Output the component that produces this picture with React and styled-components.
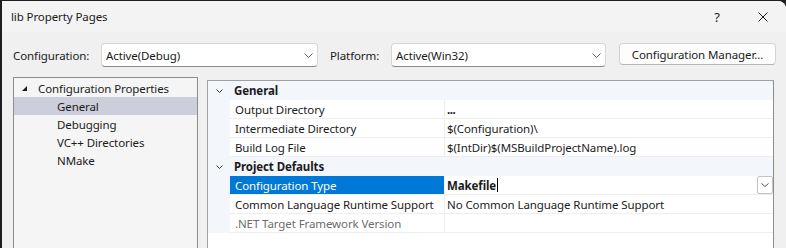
import React from 'react';
import styled, { createGlobalStyle } from 'styled-components';

const Global = createGlobalStyle`
  html, body { margin: 0; padding: 0; background: #1e1e1e; }
  body {
    font-family: "Noto Sans", "Open Sans", sans-serif;
    font-size: 11.5px;
    letter-spacing: -0.1px;
    color: #1b1b1b;
  }
  #root { width: 786px; height: 248px; overflow: hidden; }
`;

const Win = styled.div`
  margin: 1px 0 0 2px;
  width: 784px;
  height: 247px;
  background: #f0f0f0;
  border-top-right-radius: 8px;
  overflow: hidden;
  display: flex;
  flex-direction: column;
`;

const TitleBar = styled.div`
  height: 31px;
  flex-shrink: 0;
  background: #f3f3f3;
  display: flex;
  align-items: center;
  padding-left: 9px;
`;

const Title = styled.div`
  flex: 1;
  color: #1a1a1a;
`;

const CaptionBtn = styled.div`
  width: 46px;
  height: 31px;
  display: flex;
  align-items: center;
  justify-content: center;
  font-size: 13px;
  color: #1a1a1a;
`;

const Toolbar = styled.div`
  margin-top: 11px;
  padding-left: 11px;
  height: 24px;
  display: flex;
  align-items: center;
  flex-shrink: 0;
`;

const Label = styled.div`
  width: ${(p) => p.$w}px;
  flex-shrink: 0;
  color: #1a1a1a;
`;

const Combo = styled.div`
  width: ${(p) => p.$w}px;
  height: 24px;
  box-sizing: border-box;
  background: #ffffff;
  border: 1px solid #d6d6d6;
  border-bottom-color: #8a8a8a;
  border-radius: 4px;
  display: flex;
  align-items: center;
  padding: 0 0 0 4px;
  margin-right: ${(p) => p.$mr}px;
  flex-shrink: 0;
`;

const ComboText = styled.div`
  flex: 1;
`;

const Chevron = styled.svg`
  flex-shrink: 0;
`;

const Button = styled.div`
  width: 157px;
  height: 22px;
  box-sizing: border-box;
  align-self: flex-start;
  background: #fdfdfd;
  border: 1px solid #d3d3d3;
  border-bottom-color: #b5b5b5;
  border-radius: 4px;
  display: flex;
  align-items: center;
  justify-content: center;
  flex-shrink: 0;
`;

const Body = styled.div`
  flex: 1;
  display: flex;
  align-items: flex-start;
  gap: 9px;
  margin-top: 10px;
  padding-left: 11px;
`;

const Tree = styled.div`
  width: 185px;
  height: 200px;
  box-sizing: border-box;
  border: 1px solid #8d8d8d;
  background: #f5f5f5;
  padding-top: 1px;
  flex-shrink: 0;
`;

const TreeRow = styled.div`
  height: 18px;
  display: flex;
  align-items: center;
  padding-left: ${(p) => p.$indent}px;
  background: ${(p) => (p.$selected ? '#cccedb' : 'transparent')};
  white-space: nowrap;
`;

const Expander = styled.svg`
  margin-left: -16px;
  margin-right: 11px;
  flex-shrink: 0;
`;

const Grid = styled.div`
  width: 567px;
  height: 200px;
  box-sizing: border-box;
  margin-top: 3px;
  border: 1px solid #a0a0a0;
  border-right-color: #8d8d8d;
  background: #ffffff;
  flex-shrink: 0;
`;

const CatRow = styled.div`
  height: 19px;
  display: flex;
  align-items: center;
  background: #f3f6fb;
  font-weight: 700;
`;

const CatChevron = styled.div`
  width: 22px;
  height: 19px;
  display: flex;
  align-items: center;
  justify-content: center;
  flex-shrink: 0;
`;

const CatTitle = styled.div`
  padding-left: 4px;
`;

const PropRow = styled.div`
  height: 19px;
  display: flex;
`;

const Gutter = styled.div`
  width: 22px;
  flex-shrink: 0;
  background: #f3f6fb;
`;

const NameCell = styled.div`
  width: 215px;
  flex-shrink: 0;
  box-sizing: border-box;
  height: 19px;
  padding-left: 5px;
  display: flex;
  align-items: center;
  overflow: hidden;
  border-bottom: 1px solid #eeeeee;
  border-right: 1px solid #eeeeee;
  background: ${(p) => (p.$selected ? '#0078d7' : '#ffffff')};
  color: ${(p) => (p.$selected ? '#ffffff' : p.$disabled ? '#6d6d6d' : '#1b1b1b')};
  white-space: nowrap;
`;

const ValueCell = styled.div`
  flex: 1;
  height: 19px;
  box-sizing: border-box;
  padding-left: 2px;
  display: flex;
  align-items: center;
  border-bottom: 1px solid #eeeeee;
  font-weight: ${(p) => (p.$bold ? 700 : 400)};
  white-space: nowrap;
`;

const Caret = styled.span`
  display: inline-block;
  width: 1px;
  height: 14px;
  background: #000;
  margin-left: 1px;
`;

const ValueText = styled.div`
  flex: 1;
  display: flex;
  align-items: center;
`;

const Ellipsis = styled.span`
  font-weight: 700;
  letter-spacing: -0.5px;
`;

const DropBtn = styled.div`
  width: 16px;
  height: 18px;
  box-sizing: border-box;
  border: 1px solid #c4c4c4;
  border-radius: 2px;
  background: #ffffff;
  display: flex;
  align-items: center;
  justify-content: center;
  align-self: flex-start;
`;

const Down = ({ w = 9, h = 5, color = '#5f5f5f', mr = 0 }) => (
  <Chevron width={w} height={h} viewBox={`0 0 ${w} ${h}`} style={{ marginRight: mr }}>
    <polyline points={`0.5,0.5 ${w / 2},${h - 0.5} ${w - 0.5},0.5`} fill="none" stroke={color} strokeWidth="1" />
  </Chevron>
);

const categories = [
  {
    title: 'General',
    props: [
      { name: 'Output Directory', value: '...', dots: true },
      { name: 'Intermediate Directory', value: '$(Configuration)\\' },
      { name: 'Build Log File', value: '$(IntDir)$(MSBuildProjectName).log' },
    ],
  },
  {
    title: 'Project Defaults',
    props: [
      { name: 'Configuration Type', value: 'Makefile', selected: true },
      { name: 'Common Language Runtime Support', value: 'No Common Language Runtime Support' },
      { name: '.NET Target Framework Version', value: '', disabled: true },
    ],
  },
];

export default function App() {
  return (
    <>
      <Global />
      <Win>
        <TitleBar>
          <Title>lib Property Pages</Title>
          <CaptionBtn>?</CaptionBtn>
          <CaptionBtn>
            <svg width="10" height="10" viewBox="0 0 10 10">
              <path d="M0.5 0.5 L9.5 9.5 M9.5 0.5 L0.5 9.5" stroke="#1a1a1a" strokeWidth="1" />
            </svg>
          </CaptionBtn>
        </TitleBar>
        <Toolbar>
          <Label $w={88}>Configuration:</Label>
          <Combo $w={217} $mr={12}>
            <ComboText>Active(Debug)</ComboText>
            <Down mr={4} />
          </Combo>
          <Label $w={61}>Platform:</Label>
          <Combo $w={215} $mr={13}>
            <ComboText>Active(Win32)</ComboText>
            <Down mr={4} />
          </Combo>
          <Button>Configuration Manager...</Button>
        </Toolbar>
        <Body>
          <Tree>
            <TreeRow $indent={24}>
              <Expander width="5" height="5" viewBox="0 0 5 5">
                <polygon points="5,0 5,5 0,5" fill="#1a1a1a" />
              </Expander>
              Configuration Properties
            </TreeRow>
            <TreeRow $indent={43} $selected>General</TreeRow>
            <TreeRow $indent={43}>Debugging</TreeRow>
            <TreeRow $indent={43}>VC++ Directories</TreeRow>
            <TreeRow $indent={43}>NMake</TreeRow>
          </Tree>
          <Grid>
            {categories.map((c) => (
              <React.Fragment key={c.title}>
                <CatRow>
                  <CatChevron>
                    <Down w={7} h={4} color="#333" />
                  </CatChevron>
                  <CatTitle>{c.title}</CatTitle>
                </CatRow>
                {c.props.map((p) => (
                  <PropRow key={p.name}>
                    <Gutter />
                    <NameCell $selected={p.selected} $disabled={p.disabled}>{p.name}</NameCell>
                    <ValueCell $bold={p.selected}>
                      <ValueText>
                        {p.dots ? <Ellipsis>{p.value}</Ellipsis> : p.value}
                        {p.selected && <Caret />}
                      </ValueText>
                      {p.selected && (
                        <DropBtn>
                          <Down w={8} h={4} color="#555" />
                        </DropBtn>
                      )}
                    </ValueCell>
                  </PropRow>
                ))}
              </React.Fragment>
            ))}
          </Grid>
        </Body>
      </Win>
    </>
  );
}
